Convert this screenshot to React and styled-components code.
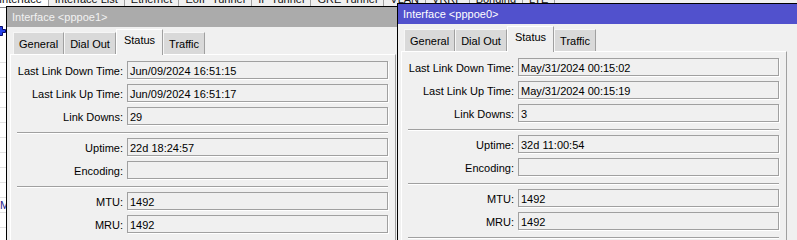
import styled, { createGlobalStyle } from "styled-components";

const Global = createGlobalStyle`
  html, body { margin: 0; padding: 0; background: #fff; overflow: hidden; }
  body { font-family: "Liberation Sans", Arial, sans-serif; font-size: 11px; color: #000; }
`;

const Desktop = styled.div`
  position: relative;
  width: 797px;
  height: 240px;
  overflow: hidden;
  background: #fff;
`;

const BgApp = styled.div`
  display: flex;
  flex-direction: column;
`;

const TopTabs = styled.div`
  display: flex;
  height: 16px;
  margin: -9px 0 0 -7px;
  background: #f0f0f0;
  border-bottom: 1px solid #8a8a8a;
`;

const TopTab = styled.div`
  padding: 0 6px;
  line-height: 17px;
  white-space: nowrap;
  color: #111;
  background: ${(p) => (p.$on ? "#fff" : "#f0f0f0")};
  border-right: 1px solid #a0a0a0;
`;

const Toolbar = styled.div`
  height: 40px;
  display: flex;
  align-items: center;
  padding-top: 5px;
  box-sizing: border-box;
  margin-left: -4px;
`;

const ListRow = styled.div`
  height: 15px;
  box-sizing: border-box;
  border-bottom: 1px solid #e2e2e2;
  line-height: 15px;
  padding-left: 0;
  color: #1c1c8c;
`;

const Win = styled.div`
  position: absolute;
  left: ${(p) => p.$x}px;
  top: ${(p) => p.$y}px;
  width: ${(p) => p.$w}px;
  height: 260px;
  background: #f0f0f0;
  border: 1px solid #000;
  box-sizing: border-box;
`;

const TitleBar = styled.div`
  height: 20px;
  line-height: 20px;
  padding-left: 5px;
  background: ${(p) => (p.$active ? "#5151cd" : "#ababab")};
  color: ${(p) => (p.$active ? "#fff" : "#f2f2f2")};
  white-space: nowrap;
`;

const TabStrip = styled.div`
  position: relative;
  z-index: 1;
  display: flex;
  align-items: flex-start;
  height: 28px;
  margin-bottom: -1px;
  padding: 2px 0 0 6px;
  box-sizing: border-box;
`;

const Tab = styled.div`
  box-sizing: border-box;
  height: ${(p) => (p.$on ? 26 : 22)}px;
  margin-top: ${(p) => (p.$on ? 0 : 3)}px;
  padding: ${(p) => (p.$on ? "3px 7px 0" : "4px 5px 0")};
  line-height: 14px;
  background: ${(p) => (p.$on ? "#f0f0f0" : "#d9d9d9")};
  border-top: 1px solid ${(p) => (p.$on ? "#fff" : "#f6f6f6")};
  border-left: 1px solid ${(p) => (p.$on ? "#fff" : "#f6f6f6")};
  border-right: 1px solid #a0a0a0;
  white-space: nowrap;
`;

const Panel = styled.div`
  margin-left: 3px;
  width: 386px;
  height: 200px;
  box-sizing: border-box;
  border-top: 1px solid #fff;
  border-left: 1px solid #fff;
  border-right: 1px solid #a0a0a0;
  padding: 6px 7px 0 6px;
`;

const Form = styled.div`
  display: grid;
  grid-template-columns: 106px 261px;
  column-gap: 4px;
  row-gap: 5px;
`;

const Label = styled.div`
  height: 18px;
  box-sizing: border-box;
  padding-top: 2px;
  line-height: 16px;
  text-align: right;
  white-space: nowrap;
`;

const Field = styled.div`
  height: 18px;
  box-sizing: border-box;
  border: 1px solid #a0a0a0;
  box-shadow: 1px 1px 0 #fff;
  padding: 1px 2px 0;
  line-height: 16px;
  background: #f0f0f0;
  white-space: nowrap;
`;

const Sep = styled.div`
  grid-column: 1 / -1;
  height: 1px;
  margin-top: 2px;
  background: #a0a0a0;
  box-shadow: 0 1px 0 #fff;
`;

const PlusIcon = () => (
  <svg width="10" height="10" viewBox="0 0 10 10">
    <path d="M3.5 0.5h3v3h3v3h-3v3h-3v-3h-3v-3h3z" fill="#2440e6" stroke="#0a0a6a" strokeWidth="1" />
  </svg>
);

const topTabs = ["Interface", "Interface List", "Ethernet", "EoIP Tunnel", "IP Tunnel", "GRE Tunnel", "VLAN", "VRRP", "Bonding", "LTE"];

const tabs = ["General", "Dial Out", "Status", "Traffic"];

const windows = [
  {
    name: "pppoe1",
    x: 6,
    y: 6,
    w: 420,
    active: false,
    groups: [
      [["Last Link Down Time:", "Jun/09/2024 16:51:15"], ["Last Link Up Time:", "Jun/09/2024 16:51:17"], ["Link Downs:", "29"]],
      [["Uptime:", "22d 18:24:57"], ["Encoding:", ""]],
      [["MTU:", "1492"], ["MRU:", "1492"]],
      [["Remote Address:", ""]],
    ],
  },
  {
    name: "pppoe0",
    x: 397,
    y: 3,
    w: 420,
    active: true,
    groups: [
      [["Last Link Down Time:", "May/31/2024 00:15:02"], ["Last Link Up Time:", "May/31/2024 00:15:19"], ["Link Downs:", "3"]],
      [["Uptime:", "32d 11:00:54"], ["Encoding:", ""]],
      [["MTU:", "1492"], ["MRU:", "1492"]],
      [["Remote Address:", ""]],
    ],
  },
];

const Dialog = ({ win }) => (
  <Win $x={win.x} $y={win.y} $w={win.w}>
    <TitleBar $active={win.active}>Interface &lt;{win.name}&gt;</TitleBar>
    <TabStrip>
      {tabs.map((t) => (
        <Tab key={t} $on={t === "Status"}>{t}</Tab>
      ))}
    </TabStrip>
    <Panel>
      <Form>
        {win.groups.map((g, gi) => [
          gi > 0 && <Sep key={"s" + gi} />,
          ...g.map(([label, value]) => [
            <Label key={"l" + label}>{label}</Label>,
            <Field key={"f" + label}>{value}</Field>,
          ]),
        ])}
      </Form>
    </Panel>
  </Win>
);

export default function App() {
  const rows = Array.from({ length: 13 }, (_, i) => (i === 10 ? "M" : ""));
  return (
    <Desktop>
      <Global />
      <BgApp>
        <TopTabs>
          {topTabs.map((t, i) => (
            <TopTab key={t} $on={i === 0}>{t}</TopTab>
          ))}
        </TopTabs>
        <Toolbar>
          <PlusIcon />
        </Toolbar>
        {rows.map((r, i) => (
          <ListRow key={i}>{r}</ListRow>
        ))}
      </BgApp>
      {windows.map((w) => (
        <Dialog key={w.name} win={w} />
      ))}
    </Desktop>
  );
}
